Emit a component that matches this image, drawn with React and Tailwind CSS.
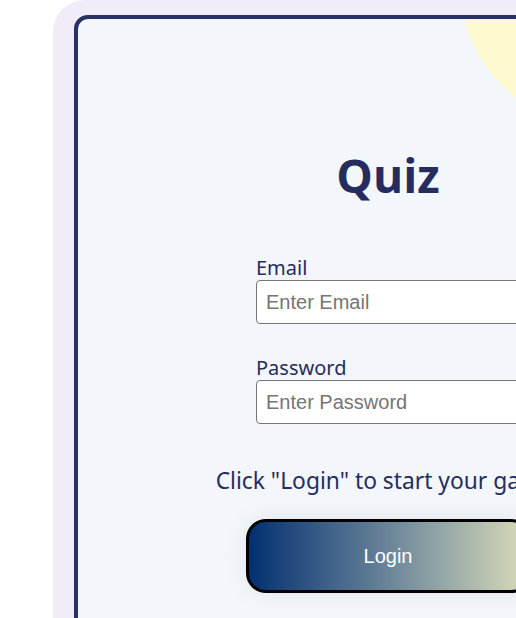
export default function App() {
  return (
    <div className="w-[516px] h-[618px] overflow-hidden bg-white" style={{ fontFamily: '"Noto Sans", sans-serif' }}>
      <div className="ml-[53px] w-[700px] h-[700px] rounded-tl-[32px] bg-[#f1ecf8] pt-[15px] pl-[21px]">
        <div className="relative w-[628px] h-[700px] overflow-hidden rounded-[14px] border-4 border-[#283163] bg-[#f3f6fb]">
          <div className="absolute left-[381px] top-[-190px] w-[302px] h-[302px] rounded-full bg-[#fff9d0]" />
          <div className="relative flex flex-col items-center">
            <h1 className="mt-[128px] text-[46px] leading-[56px] font-bold text-[#262d5e]" style={{ fontFamily: '"Open Sans", sans-serif' }}>Quiz</h1>
            <div className="mt-[53px] flex w-[264px] flex-col">
              <label className="text-[20px] leading-[24px] text-[#262d5e]">Email</label>
              <input
                type="text"
                placeholder="Enter Email"
                className="h-[44px] w-full rounded-[4px] border border-[#767676] bg-white px-[9px] text-[20px] placeholder:text-[#757575] outline-none"
                style={{ fontFamily: '"Liberation Sans", Arial, sans-serif' }}
              />
              <label className="mt-[32px] text-[20px] leading-[24px] text-[#262d5e]">Password</label>
              <input
                type="password"
                placeholder="Enter Password"
                className="h-[44px] w-full rounded-[4px] border border-[#767676] bg-white px-[9px] text-[20px] placeholder:text-[#757575] outline-none"
                style={{ fontFamily: '"Liberation Sans", Arial, sans-serif' }}
              />
            </div>
            <p className="mt-[42px] whitespace-nowrap text-[22.8px] leading-[30px] text-[#262d5e]">Click "Login" to start your game!</p>
            <button
              className="mt-[23px] h-[74px] w-[285px] rounded-[20px] border-[3px] border-black bg-gradient-to-r from-[#003070] to-[#dadcb8] text-[20px] text-white shadow-[0_0_24px_rgba(0,0,0,0.08)]"
              style={{ fontFamily: '"Liberation Sans", Arial, sans-serif' }}
            >
              Login
            </button>
          </div>
        </div>
      </div>
    </div>
  );
}
